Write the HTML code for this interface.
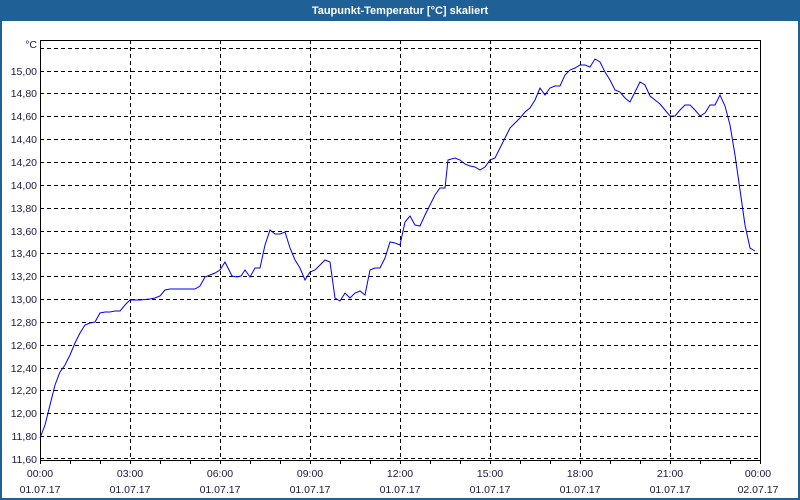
<!DOCTYPE html>
<html><head><meta charset="utf-8"><style>
html,body{margin:0;padding:0;width:800px;height:500px;overflow:hidden;background:#fff}
</style></head><body>
<svg width="800" height="500" xmlns="http://www.w3.org/2000/svg" style="display:block;font-family:'Liberation Sans',sans-serif">
<rect x="0" y="0" width="800" height="500" fill="#1f6196"/>
<rect x="2" y="21" width="796" height="477" fill="#fff"/>
<text x="400" y="14" fill="#fff" font-size="11" font-weight="bold" text-anchor="middle">Taupunkt-Temperatur [°C] skaliert</text>
<g stroke="#000" stroke-width="1" stroke-dasharray="4,3" fill="none">
<path d="M40 48.5H760M40 71.5H760M40 93.5H760M40 116.5H760M40 139.5H760M40 162.5H760M40 185.5H760M40 208.5H760M40 231.5H760M40 253.5H760M40 276.5H760M40 299.5H760M40 322.5H760M40 345.5H760M40 368.5H760M40 390.5H760M40 413.5H760M40 436.5H760M40 458.5H760"/>
<path d="M130.5 40V460M220.5 40V460M310.5 40V460M400.5 40V460M490.5 40V460M580.5 40V460M670.5 40V460"/>
</g>
<g stroke="#000" stroke-width="1" fill="none">
<path d="M40.5 40V460.5H760.5V40M40 40.5H760"/>
<path d="M70.5 460v4M100.5 460v4M130.5 460v4M160.5 460v4M190.5 460v4M220.5 460v4M250.5 460v4M280.5 460v4M310.5 460v4M340.5 460v4M370.5 460v4M400.5 460v4M430.5 460v4M460.5 460v4M490.5 460v4M520.5 460v4M550.5 460v4M580.5 460v4M610.5 460v4M640.5 460v4M670.5 460v4M700.5 460v4M730.5 460v4M40.5 460v4M760.5 460v4"/>
</g>
<polyline fill="none" stroke="#0000ee" stroke-width="1" points="40,438 45,425 50,405 55,385 60,372 65,365 70,355 75,343 80,333 85,325 90,323 95,322 100,313 105,312 110,312 115,311 120,311 125,305 130,300 140,300 150,299 155,298 160,296 165,290 170,289 175,289 185,289 195,289 200,286 205,277 210,275 215,273 220,270 225,262 228,268 232,276 237,277 241,276 245,270 250,277 255,268 260,268 265,245 270,230 275,234 280,234 285,232 290,248 295,260 300,268 305,280 310,272 315,270 320,265 325,260 330,262 335,298 340,301 345,293 350,298 355,293 360,291 365,295 370,270 375,268 380,268 385,258 390,242 395,243 400,245 405,222 410,216 415,225 420,226 425,215 430,205 435,195 440,188 445,188 448,160 455,158 460,160 465,164 470,166 475,167 480,170 485,167 490,160 495,158 500,148 505,138 510,128 515,123 520,118 525,112 530,108 535,100 540,88 545,95 550,88 555,86 560,86 565,75 570,70 575,68 580,65 585,65 590,67 595,59 600,62 605,72 610,80 615,90 620,92 625,98 630,102 635,92 640,82 645,85 650,96 655,100 660,104 665,110 670,116 675,116 680,110 685,105 690,105 695,110 700,116 705,113 710,105 715,105 720,95 725,106 730,125 735,155 740,190 745,225 750,248 755,251"/>
<g font-size="10.5" fill="#1a1a40" text-anchor="end">
<text x="37" y="48">°C</text>
<text x="37" y="75">15,00</text><text x="37" y="97">14,80</text><text x="37" y="120">14,60</text><text x="37" y="143">14,40</text><text x="37" y="166">14,20</text><text x="37" y="189">14,00</text><text x="37" y="212">13,80</text><text x="37" y="235">13,60</text><text x="37" y="257">13,40</text><text x="37" y="280">13,20</text><text x="37" y="303">13,00</text><text x="37" y="326">12,80</text><text x="37" y="349">12,60</text><text x="37" y="372">12,40</text><text x="37" y="394">12,20</text><text x="37" y="417">12,00</text><text x="37" y="440">11,80</text><text x="37" y="463">11,60</text>
</g>
<g font-size="10.5" fill="#1a1a40" text-anchor="middle">
<text x="40" y="477">00:00</text><text x="130" y="477">03:00</text><text x="220" y="477">06:00</text><text x="310" y="477">09:00</text><text x="400" y="477">12:00</text><text x="490" y="477">15:00</text><text x="580" y="477">18:00</text><text x="670" y="477">21:00</text><text x="758" y="477">00:00</text>
<text x="40" y="493">01.07.17</text><text x="130" y="493">01.07.17</text><text x="220" y="493">01.07.17</text><text x="310" y="493">01.07.17</text><text x="400" y="493">01.07.17</text><text x="490" y="493">01.07.17</text><text x="580" y="493">01.07.17</text><text x="670" y="493">01.07.17</text><text x="758" y="493">02.07.17</text>
</g>
</svg>
</body></html>
